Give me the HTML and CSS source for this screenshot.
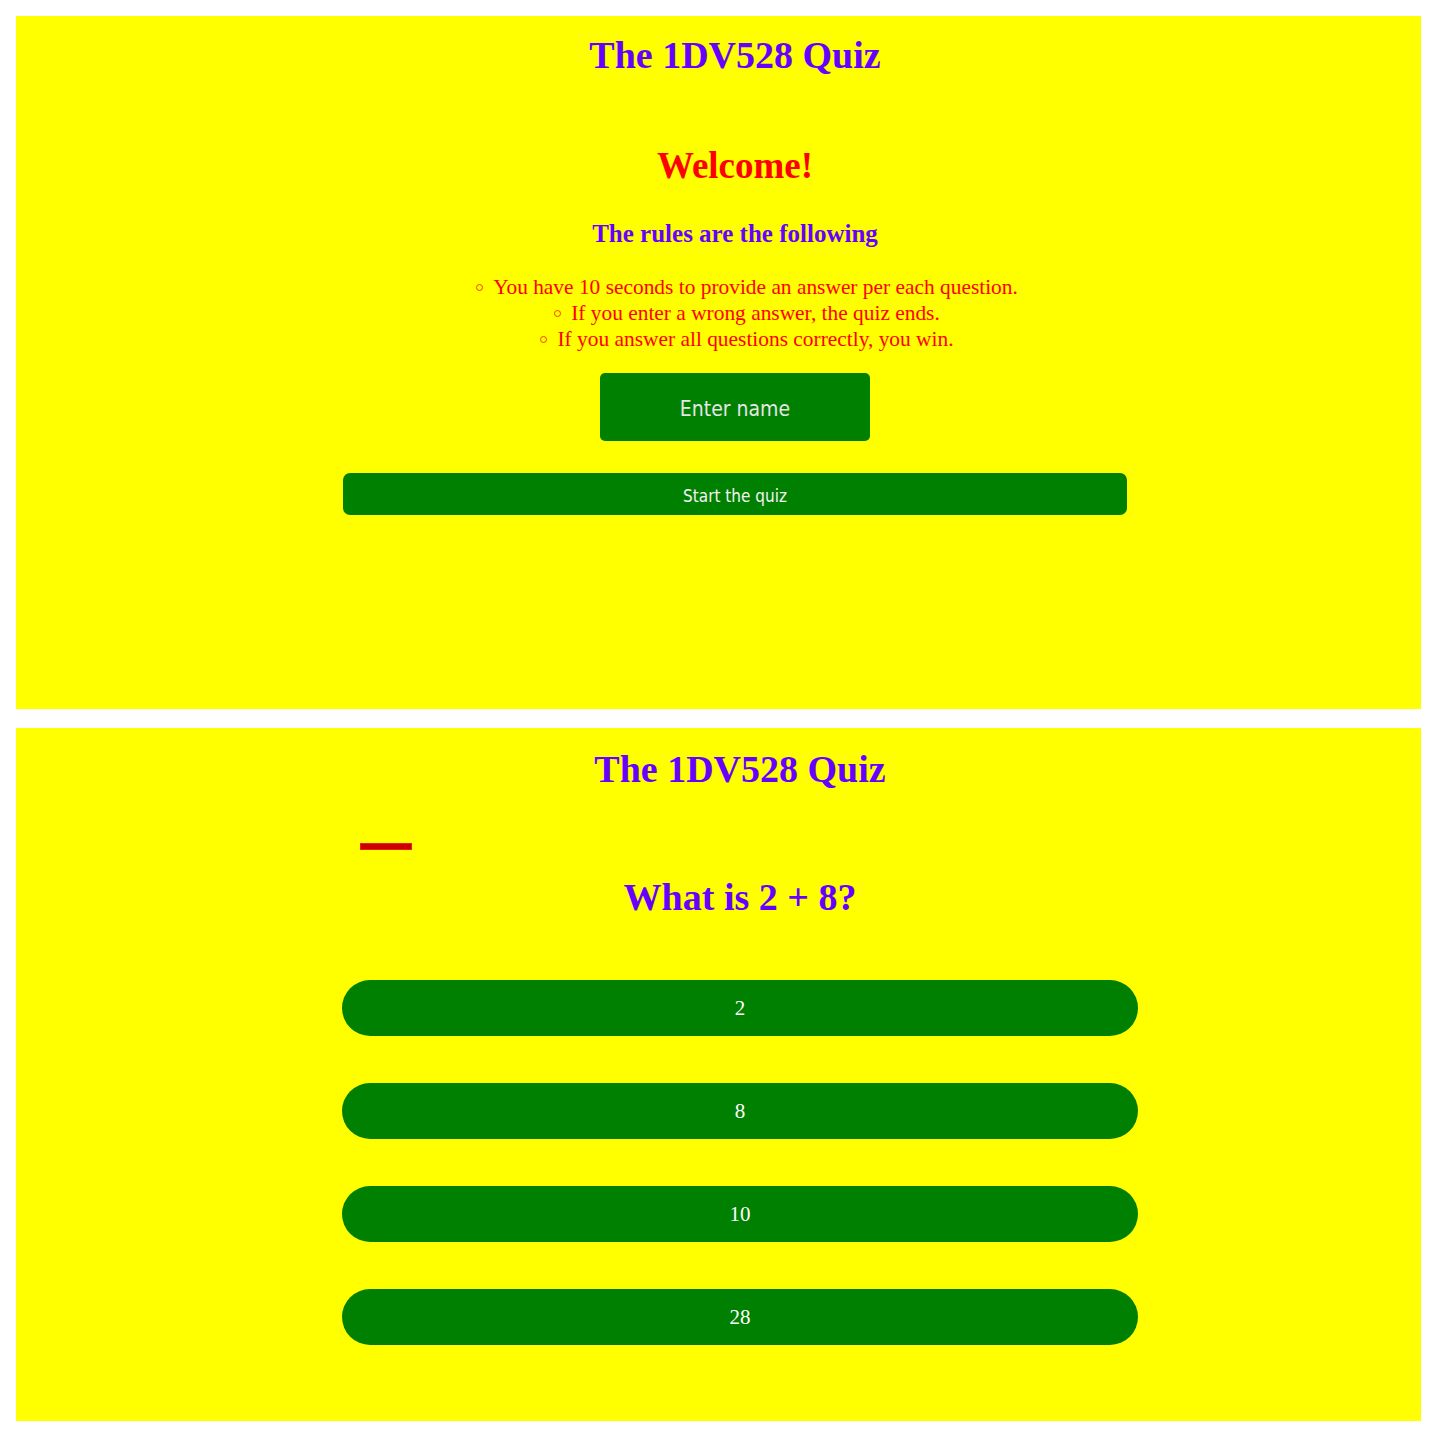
FILE: index.html
```html
<!DOCTYPE html>
<html lang="en">
<head>
<meta charset="utf-8">
<title>The 1DV528 Quiz</title>
<link rel="stylesheet" href="styles.css">
</head>
<body>
<section class="panel panel-start">
  <h1 class="title">The 1DV528 Quiz</h1>
  <h2 class="welcome">Welcome!</h2>
  <h3 class="rules-title">The rules are the following</h3>
  <ul class="rules">
    <li>You have 10 seconds to provide an answer per each question.</li>
    <li>If you enter a wrong answer, the quiz ends.</li>
    <li>If you answer all questions correctly, you win.</li>
  </ul>
  <input class="name-input" type="text" placeholder="Enter name">
  <button class="start-btn" type="button">Start the quiz</button>
</section>
<section class="panel panel-quiz">
  <h1 class="title">The 1DV528 Quiz</h1>
  <div class="quiz">
    <div class="timer"><div class="timer-bar"></div></div>
    <h2 class="question">What is 2 + 8?</h2>
    <div class="answers">
      <button class="answer" type="button">2</button>
      <button class="answer" type="button">8</button>
      <button class="answer" type="button">10</button>
      <button class="answer" type="button">28</button>
    </div>
  </div>
</section>
</body>
</html>
```
FILE: styles.css
```css
html, body {
  margin: 0;
  padding: 0;
  background: #ffffff;
}
body {
  padding: 16px 19px 19px 16px;
  display: flex;
  flex-direction: column;
  gap: 19px;
  font-family: "Liberation Serif", "Times New Roman", serif;
}
.panel {
  background: #ffff00;
  height: 693px;
  box-sizing: border-box;
  display: flex;
  flex-direction: column;
  align-items: center;
}
.panel-start {
  padding: 17px 0 0 33px;
}
.panel-quiz {
  padding: 19px 0 0 43px;
}
.title {
  margin: 0;
  font-size: 38px;
  line-height: 44px;
  font-weight: bold;
  color: #6600ff;
}
.welcome {
  margin: 68px 0 0;
  font-size: 37px;
  line-height: 42px;
  font-weight: bold;
  color: #ff0000;
}
.rules-title {
  margin: 32px 0 0;
  font-size: 25px;
  line-height: 30px;
  font-weight: bold;
  color: #6600ff;
}
.rules {
  margin: 25px 0 0;
  padding: 0 0 0 24px;
  list-style: none;
  text-align: center;
  font-size: 21.4px;
  line-height: 26px;
  color: #ff0000;
}
.rules li::before {
  content: "";
  display: inline-block;
  width: 5px;
  height: 5px;
  border: 1.5px solid #ff3b00;
  border-radius: 50%;
  margin-right: 10px;
  vertical-align: 3px;
}
.name-input {
  margin: 21px 0 0;
  width: 270px;
  height: 68px;
  box-sizing: border-box;
  border: none;
  border-radius: 5px;
  background: #008000;
  color: #ffffff;
  text-align: center;
  font-family: "DejaVu Sans Condensed", "DejaVu Sans", sans-serif;
  font-stretch: condensed;
  font-size: 21px;
  padding: 4px 0 0;
  outline: none;
}
.name-input::placeholder {
  color: #e6e6e6;
  opacity: 1;
}
.start-btn {
  margin: 32px 0 0;
  width: 784px;
  height: 42px;
  border: none;
  border-radius: 7px;
  background: #008000;
  color: #f4f4f4;
  font-family: "DejaVu Sans Condensed", "DejaVu Sans", sans-serif;
  font-stretch: condensed;
  font-size: 17px;
  padding: 3px 0 0;
}
.quiz {
  width: 796px;
  display: flex;
  flex-direction: column;
  align-items: center;
}
.timer {
  align-self: stretch;
  margin-top: 52px;
  padding-left: 18px;
}
.timer-bar {
  width: 50px;
  height: 5px;
  background: #cc0000;
  border: 1px solid #e62020;
}
.question {
  margin: 25px 0 0;
  font-size: 38px;
  line-height: 44px;
  font-weight: bold;
  color: #6600ff;
}
.answers {
  margin-top: 61px;
  align-self: stretch;
  display: flex;
  flex-direction: column;
  gap: 47px;
}
.answer {
  height: 56px;
  border: none;
  border-radius: 28px;
  background: #008000;
  color: #ffffff;
  font-family: "Liberation Serif", "Times New Roman", serif;
  font-size: 21px;
  padding: 0;
}
```
